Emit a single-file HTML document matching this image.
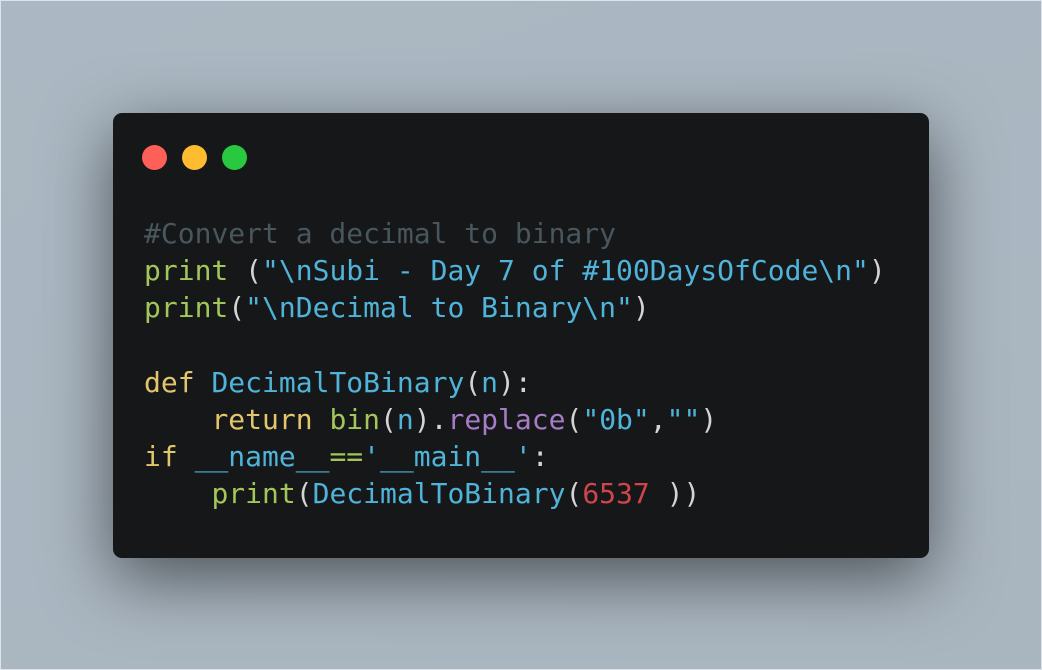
<!DOCTYPE html><html><head><style>
html,body{margin:0;padding:0}
body{width:1042px;height:670px;background:linear-gradient(160deg,#abb8c3,#a9b5bf);position:relative;overflow:hidden;box-sizing:border-box;border:1px solid #dde3e8}
.win{position:absolute;left:112px;top:112px;width:816px;height:445px;background:#161719;border-radius:9px;box-shadow:0 20px 68px rgba(0,0,0,.55)}
.dot{position:absolute;top:32px;width:25px;height:25px;border-radius:50%}
pre{position:absolute;left:31px;top:102px;margin:0;font-family:"DejaVu Sans Mono","Liberation Mono",monospace;font-size:28px;line-height:37.2px;color:#d4d4d4}
.c{color:#48565d}.g{color:#a3c65a}.s{color:#50b3d9}.y{color:#e3c56c}.p{color:#a77cc7}.r{color:#d0444b}.w{color:#d4d4d4}
</style></head><body>
<div class="win">
<div class="dot" style="left:29px;background:#fe5f57"></div>
<div class="dot" style="left:69px;background:#febc2e"></div>
<div class="dot" style="left:109px;background:#28c840"></div>
<pre><span class="c">#Convert a decimal to binary</span>
<span class="g">print</span> <span class="w">(</span><span class="s">"\nSubi - Day 7 of #100DaysOfCode\n"</span><span class="w">)</span>
<span class="g">print</span><span class="w">(</span><span class="s">"\nDecimal to Binary\n"</span><span class="w">)</span>

<span class="y">def</span> <span class="s">DecimalToBinary</span><span class="w">(</span><span class="s">n</span><span class="w">):</span>
    <span class="y">return</span> <span class="g">bin</span><span class="w">(</span><span class="s">n</span><span class="w">).</span><span class="p">replace</span><span class="w">(</span><span class="s">"0b"</span><span class="w">,</span><span class="s">""</span><span class="w">)</span>
<span class="y">if</span> <span class="s">__name__</span><span class="g">==</span><span class="s">'__main__'</span><span class="w">:</span>
    <span class="g">print</span><span class="w">(</span><span class="s">DecimalToBinary</span><span class="w">(</span><span class="r">6537</span> <span class="w">))</span></pre>
</div>
</body></html>
